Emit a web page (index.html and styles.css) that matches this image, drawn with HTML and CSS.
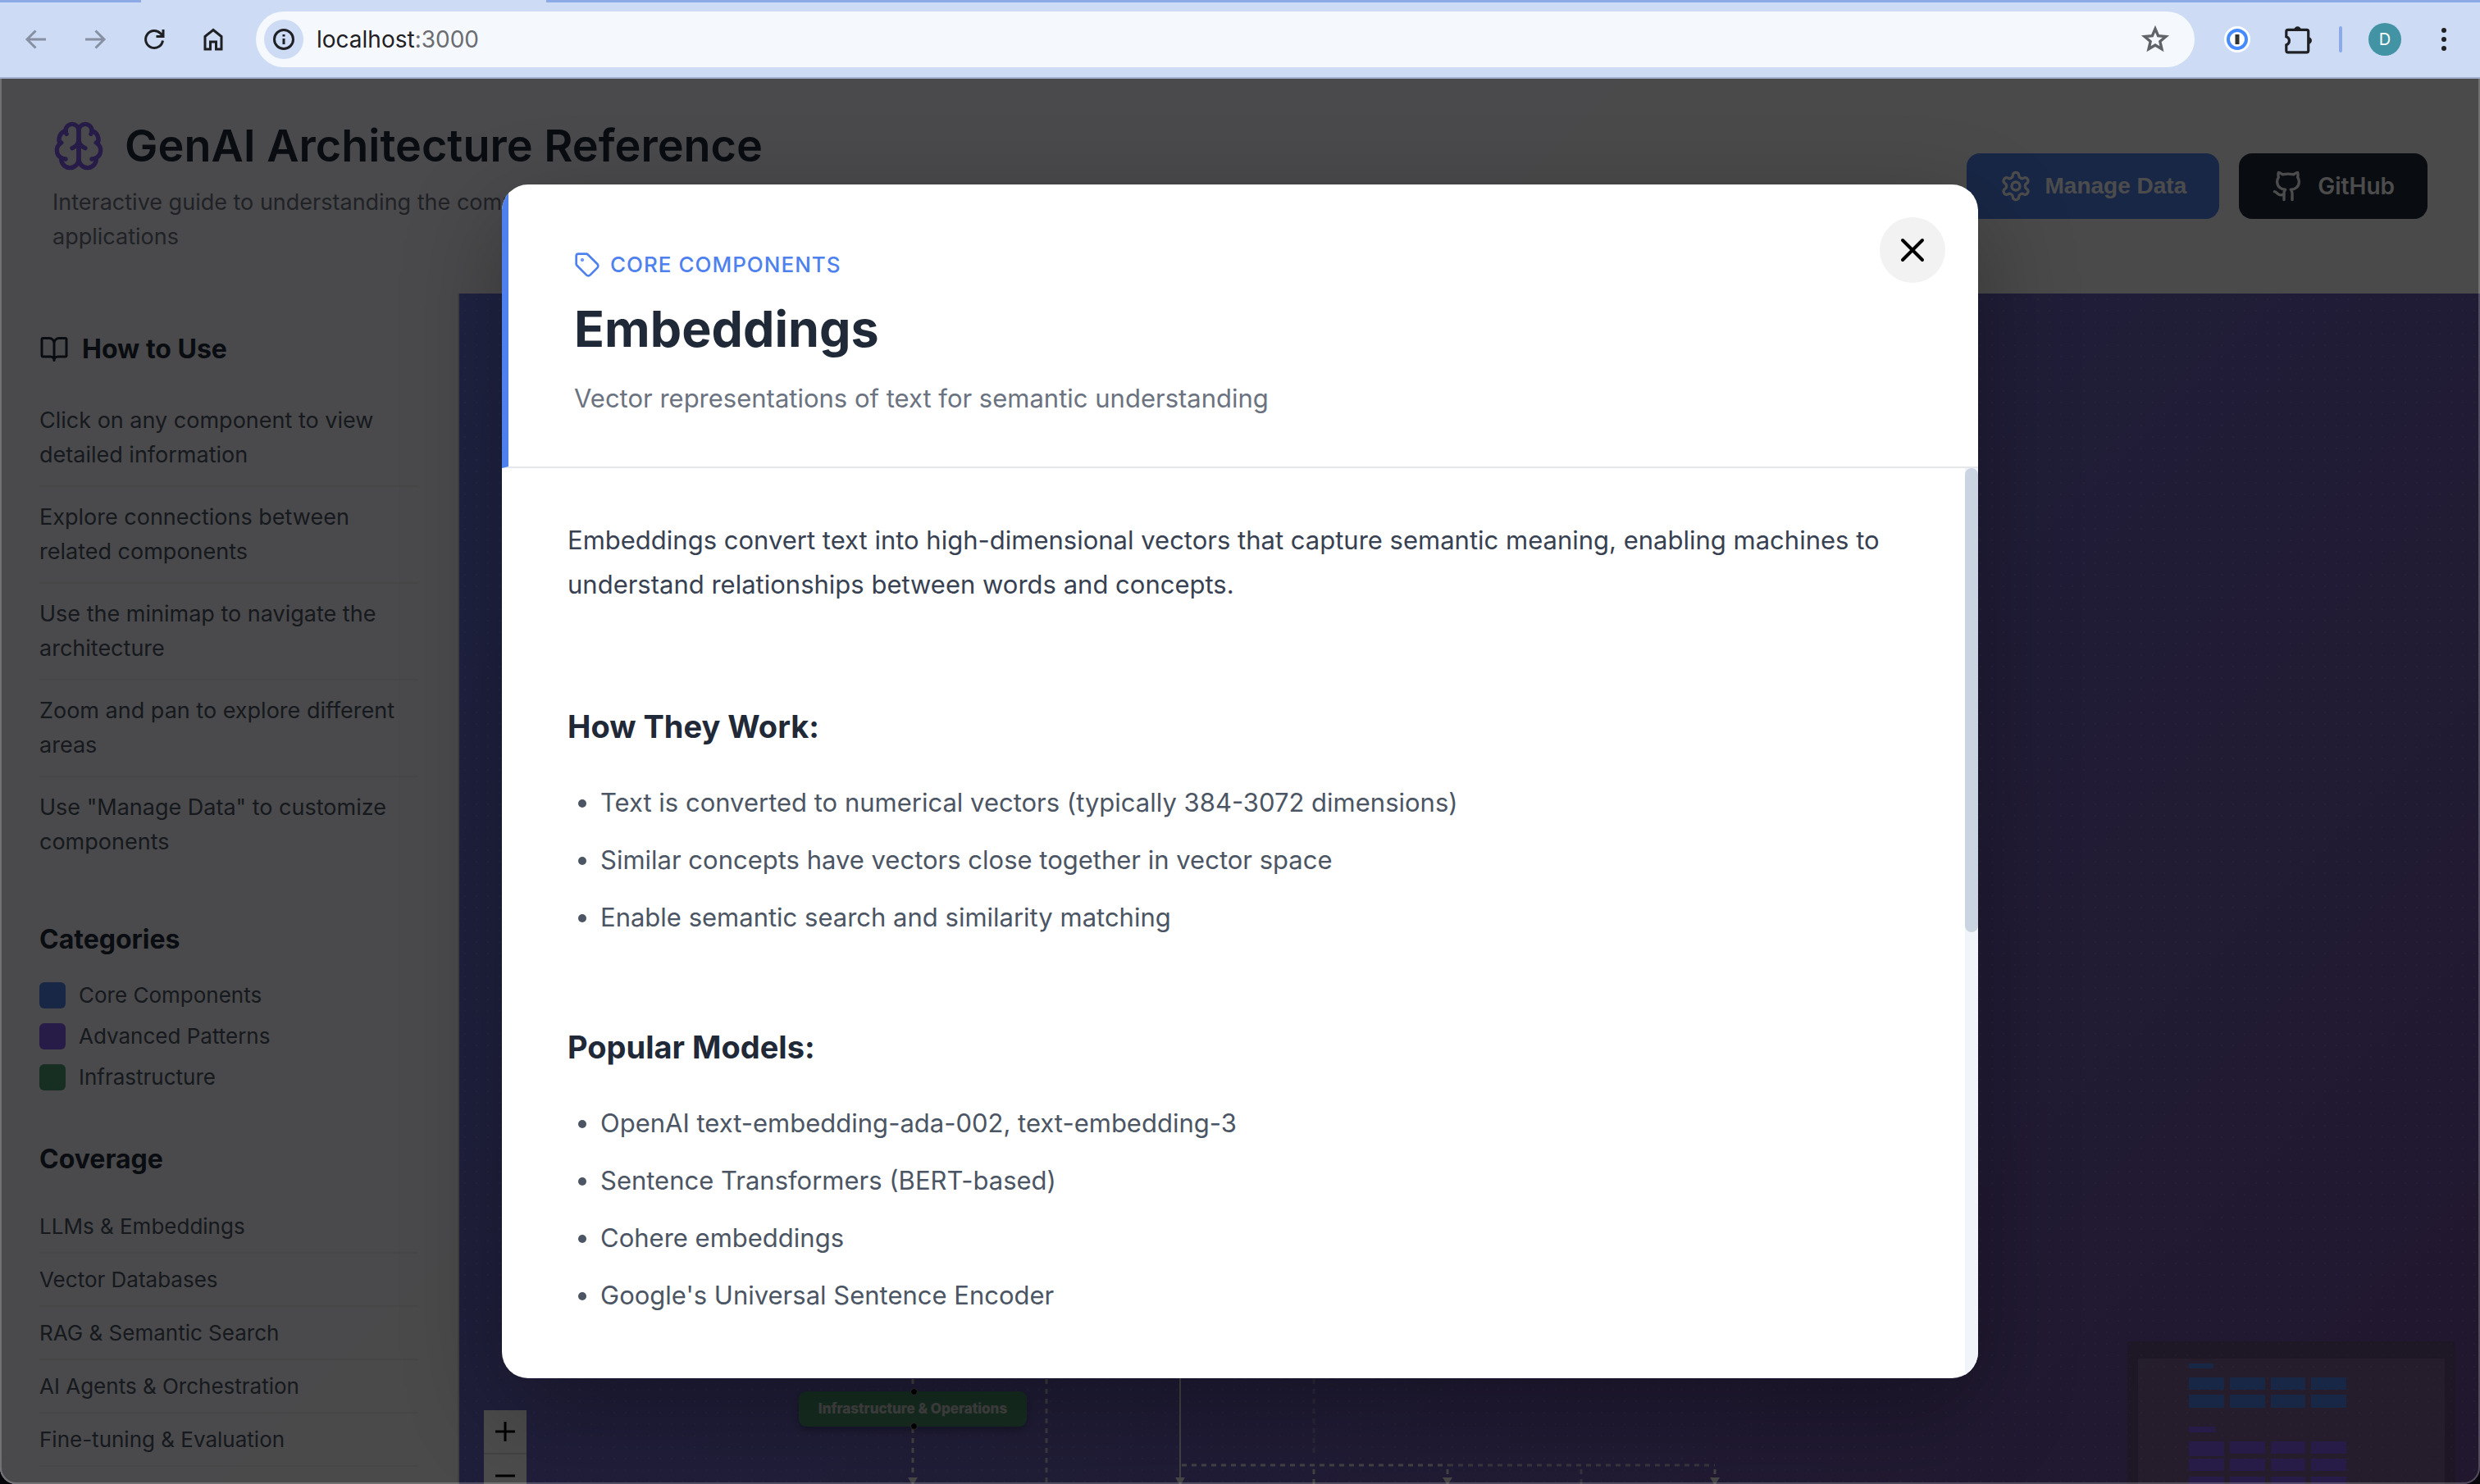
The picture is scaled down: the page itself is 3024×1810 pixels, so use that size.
FILE: index.html
```html
<!DOCTYPE html>
<html lang="en">
<head>
<meta charset="utf-8">
<title>GenAI Architecture Reference</title>
<link rel="stylesheet" href="styles.css">
</head>
<body>
<div class="window">
  <div class="toolbar">
    <span class="tab-strip tab-strip-left"></span>
    <span class="tab-strip tab-strip-right"></span>
    <nav class="nav-buttons" aria-label="Browser">
      <button class="tool muted" aria-label="Back"><svg viewBox="0 0 32 32"><path d="M28 16H5M15.500 5.500L5 16l10.500 10.500"/></svg></button>
      <button class="tool muted" aria-label="Forward"><svg viewBox="0 0 32 32"><path d="M4 16h23M16.500 5.500L27 16 16.500 26.500"/></svg></button>
      <button class="tool" aria-label="Reload"><svg viewBox="0 0 32 32"><path d="M26.500 17.500A10.500 10.500 0 1 1 23.600 8.700L26 11M27 4v8.500h-8.500"/></svg></button>
      <button class="tool" aria-label="Home"><svg viewBox="0 0 32 32"><path d="M6 12.500L16 4.500l10 8V28h-6.500v-9h-7v9H6z"/></svg></button>
    </nav>
    <div class="omnibox">
      <button class="site-info" aria-label="Site information"><svg viewBox="0 0 32 32"><circle cx="16" cy="16" r="11.500"/><path d="M16 15v7M16 10v2.500"/></svg></button>
      <span class="url" role="textbox" aria-label="Address">localhost<span class="port">:3000</span></span>
      <button class="star" aria-label="Bookmark"><svg viewBox="0 0 32 32"><path d="M16 4.500l3.200 7.700 8.300.7-6.300 5.400 1.900 8.200L16 22.200l-7.100 4.300 1.900-8.200-6.300-5.400 8.300-.7z"/></svg></button>
    </div>
    <div class="extensions">
      <button class="tool passwords" aria-label="Password manager"><svg viewBox="0 0 32 32"><circle cx="16" cy="16" r="16" fill="#fff" stroke="none"/><circle cx="16" cy="16" r="11" fill="#fff" stroke="#458bff" stroke-width="4"/><path d="M16 10v12" stroke="#333" stroke-width="5"/></svg></button>
      <button class="tool puzzle" aria-label="Extensions"><svg viewBox="0 0 36 36"><path d="M5.500 9q0-2 2-2H29q2 0 2 2v22q0 2-2 2H7.500q-2 0-2-2v-6.500a5 5 0 0 0 0-9.500z"/><path d="M14.500 7a4 4 0 0 1 8 0zM31 15.500a4 4 0 0 1 0 8z" fill="#1f2023" stroke="none"/></svg></button>
      <span class="divider"></span>
      <button class="avatar" aria-label="Profile">D</button>
      <button class="tool menu" aria-label="Menu"><svg viewBox="0 0 32 32" class="dots"><circle cx="16" cy="5" r="3"/><circle cx="16" cy="16" r="3"/><circle cx="16" cy="27" r="3"/></svg></button>
    </div>
  </div>

  <div class="app">
    <header class="header">
      <div class="brand">
        <h1 class="title"><svg class="icon brain" viewBox="0 0 24 24"><path d="M12 5a3 3 0 1 0-5.997.125 4 4 0 0 0-2.526 5.770 4 4 0 0 0 .556 6.588A4 4 0 1 0 12 18Z"/><path d="M12 5a3 3 0 1 1 5.997.125 4 4 0 0 1 2.526 5.770 4 4 0 0 1-.556 6.588A4 4 0 1 1 12 18Z"/><path d="M15 13a4.500 4.500 0 0 1-3-4 4.500 4.500 0 0 1-3 4M17.599 6.500a3 3 0 0 0 .399-1.375M6.003 5.125A3 3 0 0 0 6.401 6.500M3.477 10.896a4 4 0 0 1 .585-.396M19.938 10.500a4 4 0 0 1 .585.396M6 18a4 4 0 0 1-1.967-.516M19.967 17.484A4 4 0 0 1 18 18"/></svg>GenAI Architecture Reference</h1>
        <p class="tagline">Interactive guide to understanding the components and patterns of modern generative AI<br>applications</p>
      </div>
      <div class="actions">
        <button class="btn btn-primary"><svg class="icon" viewBox="0 0 24 24"><path d="M12.220 2h-.44a2 2 0 0 0-2 2v.18a2 2 0 0 1-1 1.730l-.43.25a2 2 0 0 1-2 0l-.15-.08a2 2 0 0 0-2.730.73l-.22.38a2 2 0 0 0 .73 2.730l.15.1a2 2 0 0 1 1 1.720v.51a2 2 0 0 1-1 1.740l-.15.09a2 2 0 0 0-.73 2.730l.22.38a2 2 0 0 0 2.730.73l.15-.08a2 2 0 0 1 2 0l.43.25a2 2 0 0 1 1 1.730V20a2 2 0 0 0 2 2h.44a2 2 0 0 0 2-2v-.18a2 2 0 0 1 1-1.730l.43-.25a2 2 0 0 1 2 0l.15.08a2 2 0 0 0 2.730-.73l.22-.39a2 2 0 0 0-.73-2.730l-.15-.08a2 2 0 0 1-1-1.740v-.5a2 2 0 0 1 1-1.740l.15-.09a2 2 0 0 0 .73-2.730l-.22-.38a2 2 0 0 0-2.730-.73l-.15.08a2 2 0 0 1-2 0l-.43-.25a2 2 0 0 1-1-1.730V4a2 2 0 0 0-2-2z"/><circle cx="12" cy="12" r="3"/></svg>Manage Data</button>
        <a class="btn btn-dark" href="#github"><svg class="icon" viewBox="0 0 24 24"><path d="M15 22v-4a4.800 4.800 0 0 0-1-3.500c3 0 6-2 6-5.500.08-1.250-.27-2.480-1-3.500.28-1.150.28-2.350 0-3.500 0 0-1 0-3 1.500-2.640-.5-5.360-.5-8 0C6 2 5 2 5 2c-.3 1.150-.3 2.350 0 3.500A5.403 5.403 0 0 0 4 9c0 3.500 3 5.500 6 5.500-.39.49-.68 1.050-.85 1.650-.17.6-.22 1.230-.15 1.850v4"/><path d="M9 18c-4.510 2-5-2-7-2"/></svg>GitHub</a>
      </div>
    </header>

    <div class="workspace">
      <aside class="sidebar">
        <section>
          <h2 class="side-title"><svg class="icon book" viewBox="0 0 24 24"><path d="M12 7v14M3 18a1 1 0 0 1-1-1V4a1 1 0 0 1 1-1h5a4 4 0 0 1 4 4 4 4 0 0 1 4-4h5a1 1 0 0 1 1 1v13a1 1 0 0 1-1 1h-6a3 3 0 0 0-3 3 3 3 0 0 0-3-3z"/></svg>How to Use</h2>
          <ul class="tips">
            <li>Click on any component to view detailed information</li>
            <li>Explore connections between related components</li>
            <li>Use the minimap to navigate the architecture</li>
            <li>Zoom and pan to explore different areas</li>
            <li>Use "Manage Data" to customize components</li>
          </ul>
        </section>
        <section>
          <h2 class="side-title">Categories</h2>
          <ul class="legend">
            <li><span class="swatch core"></span>Core Components</li>
            <li><span class="swatch advanced"></span>Advanced Patterns</li>
            <li><span class="swatch infra"></span>Infrastructure</li>
          </ul>
        </section>
        <section>
          <h2 class="side-title">Coverage</h2>
          <ul class="coverage">
            <li>LLMs &amp; Embeddings</li>
            <li>Vector Databases</li>
            <li>RAG &amp; Semantic Search</li>
            <li>AI Agents &amp; Orchestration</li>
            <li>Fine-tuning &amp; Evaluation</li>
          </ul>
        </section>
      </aside>

      <main class="canvas">
        <svg class="edges" width="1600" height="140" viewBox="0 0 1600 140">
          <g class="dashed">
            <path d="M553 0v131"/>
            <path d="M716 0v140" opacity=".8"/>
            <path d="M1042 0v108" opacity=".3"/><path d="M1042 122v18"/>
            <path d="M1368 122v18" opacity=".6"/>
            <path d="M881 117h325"/>
            <path d="M1206 117h325" opacity=".7"/>
            <path d="M1205 122v10M1531 122v10"/>
          </g>
          <path class="solid" d="M879 0v132"/>
          <path class="arrows" d="M547 132h12l-5 8h-2zM873 132h12l-5 8h-2zM1199 132h12l-5 8h-2zM1525 132h12l-5 8h-2z"/>
        </svg>
        <div class="node">Infrastructure &amp; Operations</div>
        <div class="controls">
          <button aria-label="Zoom in"><svg viewBox="0 0 24 24"><path d="M0 12h24M12 0v24"/></svg></button>
          <button aria-label="Zoom out"><svg viewBox="0 0 24 24"><path d="M0 12h24"/></svg></button>
        </div>
        <svg class="minimap" viewBox="0 0 400 174">
          <rect width="400" height="174" fill="#403c20" fill-opacity=".25"/>
          <rect width="400" height="260" rx="16" fill="#706c50" fill-opacity=".06"/>
          <rect x="13" y="21" width="374" height="153" fill="#f0c8ff" fill-opacity=".17"/>
          <g fill="#5082ea"><path d="M75 27h30v6H75zM75 44h43v15H75zM125 44h43v15h-43zM175 44h42v15h-42zM224 44h43v15h-43zM75 65h43v16H75zM125 65h43v16h-43zM175 65h42v16h-42zM224 65h43v16h-43z"/></g>
          <g fill="#825af0"><path d="M75 104h32v7H75zM75 122h43v18H75zM125 122h43v15h-43zM175 122h42v15h-42zM224 122h43v15h-43zM75 143h43v15H75zM125 143h43v15h-43zM175 143h42v15h-42zM224 143h43v15h-43zM75 165h43v9H75zM125 165h43v9h-43zM175 165h42v9h-42zM224 165h43v9h-43z"/></g>
        </svg>
      </main>
    </div>

    <div class="overlay">
      <div class="modal" role="dialog" aria-labelledby="modal-title">
        <button class="close" aria-label="Close"><svg class="icon" viewBox="0 0 24 24"><path d="M18 6L6 18M6 6l12 12"/></svg></button>
        <div class="modal-header">
          <div class="category"><svg class="icon" viewBox="0 0 24 24"><path d="M12.586 2.586A2 2 0 0 0 11.172 2H4a2 2 0 0 0-2 2v7.172a2 2 0 0 0 .586 1.414l8.704 8.704a2.426 2.426 0 0 0 3.420 0l6.580-6.580a2.426 2.426 0 0 0 0-3.420z"/><circle cx="7.500" cy="7.500" r=".5" fill="currentColor"/></svg>Core Components</div>
          <h2 class="modal-title" id="modal-title">Embeddings</h2>
          <p class="modal-subtitle">Vector representations of text for semantic understanding</p>
        </div>
        <div class="modal-body">
          <div class="content">
            <p>Embeddings convert text into high-dimensional vectors that capture semantic meaning, enabling machines to understand relationships between words and concepts.</p>
            <h3>How They Work:</h3>
            <ul>
              <li>Text is converted to numerical vectors (typically 384-3072 dimensions)</li>
              <li>Similar concepts have vectors close together in vector space</li>
              <li>Enable semantic search and similarity matching</li>
            </ul>
            <h3>Popular Models:</h3>
            <ul>
              <li>OpenAI text-embedding-ada-002, text-embedding-3</li>
              <li>Sentence Transformers (BERT-based)</li>
              <li>Cohere embeddings</li>
              <li>Google's Universal Sentence Encoder</li>
            </ul>
          </div>
          <div class="scrollbar"><div class="thumb"></div></div>
        </div>
      </div>
    </div>
    <div class="window-edge"></div>
  </div>
</div>
</body>
</html>
```
FILE: styles.css
```css
* { box-sizing: border-box; }
body, h1, h2, h3, p, ul { margin: 0; padding: 0; }
ul { list-style: none; }
button { border: 0; padding: 0; background: none; font: inherit; color: inherit; display: flex; align-items: center; justify-content: center; }
body { background: #06060a; font-family: Inter, "Liberation Sans", sans-serif; color: #1f2937; }
.icon { fill: none; stroke: currentColor; stroke-width: 2; stroke-linecap: round; stroke-linejoin: round; flex: none; width: 40px; height: 40px; }

.window { display: flex; flex-direction: column; height: 100vh; overflow: hidden; border-radius: 0 0 20px 20px; }

/* Browser toolbar */
.toolbar { position: relative; flex: none; height: 96px; display: flex; align-items: center; gap: 36px; padding: 2px 28px 0; background: #cddbf5; border-bottom: 2px solid #a3b0cf; }
.tab-strip { position: absolute; top: 0; height: 3px; background: #8caae6; }
.tab-strip-left { left: 0; width: 172px; }
.tab-strip-right { left: 666px; right: 0; }
.nav-buttons { display: flex; gap: 40px; }
.tool svg, .star svg, .site-info svg { width: 32px; height: 32px; fill: none; stroke: #1f2023; stroke-width: 3; }
.tool.muted svg { stroke: #8790a3; }
.tool .dots { fill: #1f2023; stroke: none; }
.omnibox { flex: 1; height: 68px; border-radius: 34px; padding: 0 30px 0 10px; display: flex; align-items: center; background: #f5f9fe; }
.site-info { width: 48px; height: 48px; border-radius: 50%; background: #cddbf5; }
.url { flex: 1; margin-left: 16px; font-size: 28px; color: #1f2023; }
.port { color: #6a6c70; }
.star svg { stroke: #606367; width: 36px; height: 36px; }
.extensions { display: flex; align-items: center; gap: 32px; }
.passwords { margin-right: 6px; }
.puzzle svg { width: 38px; height: 38px; }
.menu { margin-left: 4px; }
.divider { width: 4px; height: 32px; border-radius: 2px; background: #8caae6; }
.avatar { width: 40px; height: 40px; border-radius: 50%; background: #4294a5; color: #fff; font-size: 20px; }

/* Application */
.app { position: relative; flex: 1; min-height: 0; display: flex; flex-direction: column; background: linear-gradient(135deg, #667eea, #71509c); }
.header { flex: none; display: flex; align-items: center; justify-content: space-between; height: 262px; padding: 0 64px 10px; background: rgba(255, 255, 255, .95); }
.title { display: flex; align-items: center; gap: 24px; font-size: 54px; line-height: 88px; font-weight: 600; }
.brain { width: 64px; height: 64px; color: #825af0; }
.tagline { margin-top: 4px; font-size: 27px; line-height: 42px; color: #6b7280; }
.actions { display: flex; gap: 24px; margin-top: 10px; }
.btn { display: flex; align-items: center; gap: 16px; height: 80px; padding: 0 40px; border-radius: 16px; color: #fff; font-size: 28px; font-weight: 600; text-decoration: none; }
.btn-primary { background: #5082ea; font-family: "Liberation Sans", Arial, sans-serif; }
.btn-dark { background: #1f2937; }

.workspace { flex: 1; min-height: 0; display: flex; }
.sidebar { flex: none; width: 560px; padding: 48px; overflow: hidden; background: rgba(255, 255, 255, .95); border-right: 2px solid #d6d6d6; display: flex; flex-direction: column; gap: 60px; }
.side-title { display: flex; align-items: center; gap: 16px; font-size: 32px; line-height: 40px; font-weight: 700; }
.book { width: 36px; height: 36px; }
.tips { margin-top: 30px; font-size: 27px; line-height: 42px; color: #4b5563; }
.tips li { padding: 16px 0; border-bottom: 2px solid #ececef; }
.tips li:last-child { border-bottom-color: transparent; }
.legend { margin-top: 28px; display: flex; flex-direction: column; gap: 10px; font-size: 26px; line-height: 40px; color: #4b5563; }
.legend li { display: flex; align-items: center; gap: 16px; }
.swatch { width: 32px; height: 32px; border-radius: 6px; }
.core { background: #5082ea; }
.advanced { background: #825af0; }
.infra { background: #4f9a72; }
.coverage { margin-top: 30px; font-size: 26px; line-height: 39px; color: #4b5563; }
.coverage li { padding: 12px 0; border-bottom: 2px solid #ececef; }

/* Diagram canvas */
.canvas { position: relative; flex: 1; overflow: hidden; background: radial-gradient(circle at 7px 7px, rgba(255, 255, 255, .12) 1px, transparent 1px) 0 0 / 14px 14px; }
.edges { position: absolute; left: 0; bottom: 0; fill: none; }
.edges path { stroke: #e0e0e0; stroke-width: 2; }
.edges .dashed path { stroke-width: 3; stroke-dasharray: 6 6; }
.edges .arrows { fill: #eee; stroke: none; }
.node { position: absolute; left: 414px; bottom: 70px; width: 278px; height: 43px; border-radius: 9px; background: #4f9a72; color: #e8e8e8; font-size: 17px; line-height: 43px; font-weight: 800; text-align: center; box-shadow: 0 4px 10px rgba(0, 0, 0, .3); }
.node::before, .node::after { content: ""; position: absolute; left: 136px; width: 7px; height: 7px; border-radius: 50%; background: #000; border: 1px solid #aaa; }
.node::before { top: -4px; }
.node::after { bottom: -4px; }
.controls { position: absolute; left: 30px; bottom: -18px; width: 52px; }
.controls button { width: 52px; height: 54px; background: #fefefe; border-bottom: 2px solid #e0e0e0; }
.controls svg { width: 24px; height: 24px; stroke: #000; stroke-width: 3; }
.minimap { position: absolute; right: 30px; bottom: 0; width: 400px; height: 174px; }

/* Detail dialog */
.overlay { position: absolute; inset: 0; display: flex; align-items: center; justify-content: center; background: rgba(0, 0, 0, .7); }
.modal { position: relative; width: 1800px; max-width: 90%; height: 85%; display: flex; flex-direction: column; overflow: hidden; background: #fff; border-radius: 32px; box-shadow: 0 40px 120px rgba(0, 0, 0, .3); }
.close { position: absolute; top: 40px; right: 40px; width: 80px; height: 80px; border-radius: 50%; background: #f2f2f2; color: #000; }
.close .icon { width: 48px; height: 48px; }
.modal-header { flex: none; padding: 78px 80px 56px; border-left: 8px solid #4e81ee; border-bottom: 2px solid #e5e7eb; }
.category { display: flex; align-items: center; gap: 12px; font-size: 26px; line-height: 40px; font-weight: 500; letter-spacing: 1px; text-transform: uppercase; color: #4e81ee; }
.category .icon { width: 32px; height: 32px; }
.modal-title { margin-top: 18px; font-size: 61px; line-height: 80px; font-weight: 700; }
.modal-subtitle { margin-top: 18px; font-size: 31px; line-height: 54px; color: #6b7280; }
.modal-body { flex: 1; min-height: 0; display: flex; }
.content { flex: 1; min-width: 0; padding: 61px 80px; overflow: hidden; font-size: 31px; line-height: 54px; color: #374151; }
.content p { padding-bottom: 15px; }
.content h3 { margin: 105px 0 40px; font-size: 38px; line-height: 52px; font-weight: 700; color: #1f2937; }
.content ul { padding-left: 40px; display: flex; flex-direction: column; gap: 16px; list-style: disc; color: #4b5563; }
.scrollbar { flex: none; width: 16px; background: #f1f5f9; }
.thumb { height: 51%; border-radius: 8px; background: #cbd5e1; }

.window-edge { position: absolute; inset: 0; border: 2px solid rgba(255, 255, 255, .22); border-top: 0; border-radius: 0 0 20px 20px; pointer-events: none; }
```
